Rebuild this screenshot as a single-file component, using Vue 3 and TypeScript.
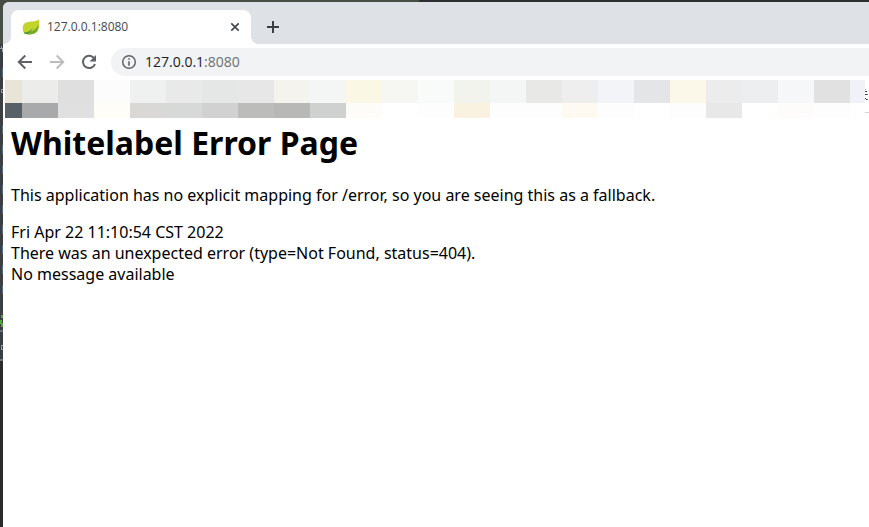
<script setup lang="ts">
import { ref } from 'vue'

const host = '127.0.0.1'
const port = ':8080'
const address = ref(host + port)

// Pixelated bookmarks: one colour per block
const upper: string[] = [
  '#e8e5d6', '#ecedea', '#dfdfdf', '#fcfcfc', '#eef1f0', '#e9e9e9', '#e4e7e6', '#e7e7e7',
  '#f4f3ed', '#f4f6f6', '#fbf7e5', '#f6f7f2', '#f9fbfa', '#f2f3ed', '#f4f6f5', '#e8e8e6',
  '#eeeeee', '#f2f4f7', '#e4e5e7', '#fbf8e9', '#ececec', '#edeef0', '#f5f7f9', '#e1e1e1', '#f0f2f7',
]
const lower: string[] = [
  '#586167', '#a7a9aa', '#e0e0e0', '#fefdf8', '#d9d8d6', '#d6d9d8', '#d1d1d1', '#bcbcba',
  '#b8b8b6', '#cfd1d0', '#fefcf8', '#ffffff', '#fdfdfd', '#faf2e1', '#fdfdfd', '#fdfdfd',
  '#fefaf2', '#fdfdfd', '#ffffff', '#fdfdfd', '#e8e8e8', '#ffffff', '#fefcfa', '#fdfdfd', '#ffffff',
]
</script>

<template>
  <div class="desktop">
    <div class="editor" aria-hidden="true">
      <svg width="3" height="527" viewBox="0 0 3 527">
        <path fill="#2b2b2c" d="M0 0h3v527H0z" />
        <path fill="#3c3f41" d="M0 44h3v316H0z" />
        <path fill="#464e45" d="M0 0h3v44H0z" />
        <path fill="#526b83" d="M2 68h1v9H2zM2 125h1v9H2zM2 145h1v9H2zM2 165h1v9H2zM2 185h1v9H2zM2 205h1v9H2zM2 225h1v9H2zM2 245h1v9H2zM2 265h1v9H2zM2 285h1v9H2z" />
        <path fill="#999b9c" d="M1 46h1v2h1v4H2v-3H0v-1h1zM1 89h2v1H2v2h1v1H1zM1 345h2v1H2v3h1v1H1z" />
        <path fill="#59a33b" d="M1 315h2v3H1zM0 320h2v3h1v4H1v-3H0z" />
        <path fill="#6e7071" d="M0 330h3v2H0zM0 359h3v2H0z" />
      </svg>
    </div>
    <div class="window">
      <header class="tabs">
        <div class="tab">
          <svg class="leaf" width="18" height="18" viewBox="0 0 18 18" aria-hidden="true">
            <path fill="#c1d42b" d="M16.8 1.3c.8 4.4.8 9.8-2 12.7-2.9 3-8.3 2.8-12 1.8C.5 13.9.1 10 1.2 7.600 2.800 3.700 7 3.800 10.400 3.500c2.900-.2 5-.8 6.400-2.200z" />
            <path fill="#72ad31" d="M16.500 6.500c.1 3-.4 5.800-2.200 7.600-3 2.900-8.100 2.700-11.500 1.700l-1-1c4.900.5 11.500-1.500 14.700-8.300z" />
            <path fill="#4d9737" d="M2 14.500c3.200-.2 6.500-1.500 8.800-4.600-1.700 4.600-5 6.100-8 5.900z" />
          </svg>
          <span class="title">{{ host }}{{ port }}</span>
          <button class="close" type="button" aria-label="Close tab">
            <svg width="10" height="10" viewBox="0 0 10 10"><path d="M1.300 1.300l7.400 7.400M8.700 1.300l-7.400 7.400" fill="none" stroke="#42474c" stroke-width="1.700" /></svg>
          </button>
        </div>
        <button class="add" type="button" aria-label="New tab">
          <svg width="12" height="12" viewBox="0 0 12 12"><path d="M6 0v12M0 6h12" fill="none" stroke="#3c4043" stroke-width="2" /></svg>
        </button>
      </header>
      <nav class="toolbar">
        <button class="tool" type="button" aria-label="Back">
          <svg width="16" height="16" viewBox="0 0 16 16"><path d="M15 8H2M8.300 1.500L1.800 8l6.500 6.500" fill="none" stroke="#5f6368" stroke-width="2" /></svg>
        </button>
        <button class="tool" type="button" aria-label="Forward" disabled>
          <svg width="16" height="16" viewBox="0 0 16 16"><path d="M1 8h13M7.700 1.500L14.200 8l-6.500 6.500" fill="none" stroke="#babcbe" stroke-width="2" /></svg>
        </button>
        <button class="tool" type="button" aria-label="Reload">
          <svg width="16" height="16" viewBox="0 0 16 16"><path d="M13.300 4.400A6.200 6.200 0 1 0 14 10" fill="none" stroke="#5f6368" stroke-width="2" /><path d="M15 1v6.500H8.500z" fill="#5f6368" /></svg>
        </button>
        <div class="omnibox">
          <svg width="16" height="16" viewBox="0 0 16 16" aria-hidden="true"><circle cx="8" cy="8" r="6.300" fill="none" stroke="#5f6368" stroke-width="1.500" /><path fill="#5f6368" d="M7.200 4.200h1.600v1.600H7.200zM7.200 7.200h1.600v4.600H7.200z" /></svg>
          <label class="address">
            <span class="url" aria-hidden="true">{{ host }}<span class="port">{{ port }}</span></span>
            <input v-model="address" type="text" aria-label="Address" spellcheck="false" />
          </label>
        </div>
      </nav>
      <div class="bookmarks" aria-hidden="true">
        <div class="mosaic">
          <div class="blocks upper"><i v-for="(c, i) in upper" :key="i" :style="{ background: c }"></i></div>
          <div class="blocks lower"><i v-for="(c, i) in lower" :key="i" :style="{ background: c }"></i></div>
        </div>
        <svg class="edge" width="4" height="38" viewBox="0 0 4 38">
          <path fill="#a9c4d8" d="M0 9h1v1H0z" />
          <path fill="#263a59" d="M0 11h2v1H0zM0 14h2v1H0zM0 18h1v1H0zM1 19h1v1H1z" />
          <path fill="#4d8297" d="M2 14h1v1H2zM2 19h1v1H2z" />
          <path fill="#d5d5d5" d="M0 32h4v1H0z" />
        </svg>
      </div>
      <main class="page">
        <h1>Whitelabel Error Page</h1>
        <p>This application has no explicit mapping for /error, so you are seeing this as a fallback.</p>
        <div>Fri Apr 22 11:10:54 CST 2022</div>
        <div>There was an unexpected error (type=Not Found, status=404).</div>
        <div>No message available</div>
      </main>
    </div>
  </div>
</template>

<style>
body {
  margin: 0;
}
</style>

<style scoped>
.desktop {
  display: grid;
  grid-template-columns: 3px minmax(0, 1fr);
  min-height: 100vh;
  overflow: hidden;
  background: linear-gradient(90deg, #464e45 0 419px, #302f31 419px);
  font-family: "Open Sans", "Noto Sans", sans-serif;
}
.editor {
  height: 100vh;
  overflow: hidden;
  background: #2b2b2c;
}
.editor svg {
  display: block;
}
.window {
  margin-top: 2px;
  background: #fff;
  border-radius: 6px 0 0 0;
  overflow: hidden;
}
button {
  display: flex;
  align-items: center;
  justify-content: center;
  padding: 0;
  border: 0;
  background: none;
}
svg {
  flex: none;
}
.tabs {
  display: flex;
  height: 34px;
  padding: 8px 8px 0;
  background: #dee1e6;
}
.tab {
  position: relative;
  display: flex;
  align-items: center;
  width: 240px;
  box-sizing: border-box;
  padding: 0 10px 0 11px;
  border-radius: 8px 8px 0 0;
  background: #fff;
}
.tab::before,
.tab::after {
  content: "";
  position: absolute;
  bottom: 0;
  width: 8px;
  height: 8px;
}
.tab::before {
  right: 100%;
  background: radial-gradient(circle at 0 0, transparent 8px, #fff 8px);
}
.tab::after {
  left: 100%;
  background: radial-gradient(circle at 100% 0, transparent 8px, #fff 8px);
}
.title {
  flex: 1;
  margin-left: 7px;
  font-size: 12px;
  line-height: 16px;
  color: #45484c;
}
.close {
  width: 12px;
  height: 16px;
}
.add {
  width: 28px;
  height: 34px;
  margin-left: 8px;
}
.toolbar {
  display: flex;
  align-items: center;
  gap: 16px;
  height: 36px;
  padding-left: 14px;
}
.tool {
  width: 16px;
  height: 28px;
}
.omnibox {
  flex: 1;
  display: flex;
  align-items: center;
  gap: 8px;
  height: 28px;
  margin-left: -2px;
  padding-left: 10px;
  border-radius: 14px 0 0 14px;
  background: #f1f3f4;
}
.address {
  display: grid;
  flex: 1;
  font-size: 14px;
  line-height: 20px;
  color: #202124;
}
.url,
.address input {
  grid-area: 1 / 1;
}
.address input {
  width: 100%;
  box-sizing: border-box;
  padding: 0;
  border: 0;
  outline: 0;
  background: none;
  font: inherit;
  color: transparent;
  caret-color: #202124;
}
.port {
  color: #6b6f74;
}
.bookmarks {
  display: flex;
  padding-left: 2px;
}
.mosaic {
  flex: 1;
  min-width: 0;
  overflow: hidden;
}
.blocks {
  display: grid;
  grid-template-columns: 17fr repeat(23, 36fr) 15fr;
}
.upper {
  height: 23px;
}
.lower {
  height: 15px;
}
.page {
  padding: 0 8px;
  font-family: "Noto Sans", "Open Sans", sans-serif;
  font-size: 16px;
  line-height: 21px;
  color: #000;
}
h1 {
  margin: 2px 0 20px;
  font-size: 32px;
  font-weight: 700;
  line-height: 45px;
}
p {
  margin: 0 0 16px;
}
</style>
